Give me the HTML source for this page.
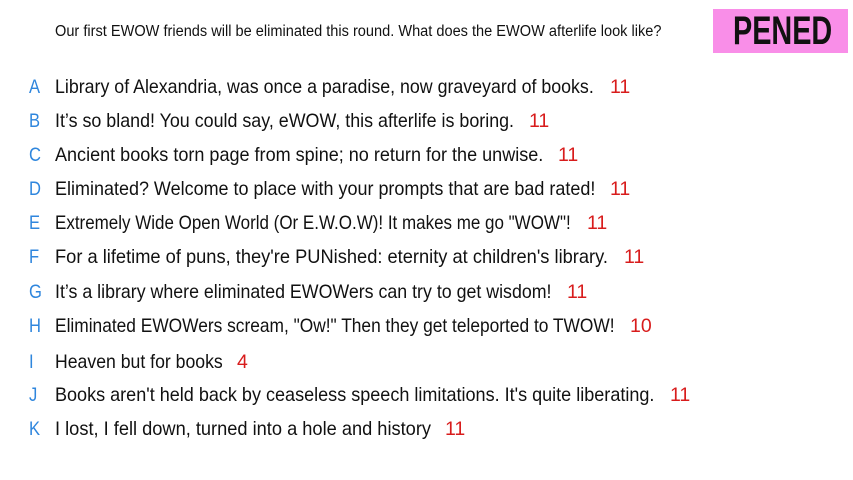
<!DOCTYPE html>
<html><head><meta charset="utf-8"><style>
body{margin:0;width:853px;height:480px;background:#fff;position:relative;overflow:hidden;font-family:"Liberation Sans",sans-serif;color:#111}
.q{position:absolute;left:55px;top:22px;font-size:15.5px;line-height:20px;white-space:nowrap;transform:scaleX(0.94);transform-origin:0 0}
.box{position:absolute;left:713px;top:9px;width:135px;height:44px;background:#f98ee8}
.box span{position:absolute;left:20px;top:0;font-size:40px;font-weight:bold;line-height:44px;color:#111;transform:scaleX(0.72);transform-origin:0 0;white-space:nowrap}
.r{position:absolute;font-size:19.5px;line-height:24px;white-space:nowrap}
.l{left:29px;color:#2f86dd;transform:scaleX(0.85);transform-origin:0 0}
.t{left:55px;transform-origin:0 0}
.n{color:#d81c1c}
</style></head><body>
<div class="q">Our first EWOW friends will be eliminated this round. What does the EWOW afterlife look like?</div>
<div class="box"><span>PENED</span></div>

<div class="r l" style="top:75px">A</div><div class="r t" style="top:75px;transform:scaleX(.912)">Library of Alexandria, was once a paradise, now graveyard of books.</div><div class="r n" style="top:75px;left:610px">11</div>
<div class="r l" style="top:109px">B</div><div class="r t" style="top:109px;transform:scaleX(.916)">It’s so bland! You could say, eWOW, this afterlife is boring.</div><div class="r n" style="top:109px;left:529px">11</div>
<div class="r l" style="top:143px">C</div><div class="r t" style="top:143px;transform:scaleX(.925)">Ancient books torn page from spine; no return for the unwise.</div><div class="r n" style="top:143px;left:558px">11</div>
<div class="r l" style="top:177px">D</div><div class="r t" style="top:177px;transform:scaleX(.922)">Eliminated? Welcome to place with your prompts that are bad rated!</div><div class="r n" style="top:177px;left:610px">11</div>
<div class="r l" style="top:211px">E</div><div class="r t" style="top:211px;transform:scaleX(.871)">Extremely Wide Open World (Or E.W.O.W)! It makes me go "WOW"!</div><div class="r n" style="top:211px;left:587px">11</div>
<div class="r l" style="top:245px">F</div><div class="r t" style="top:245px;transform:scaleX(.937)">For a lifetime of puns, they're PUNished: eternity at children's library.</div><div class="r n" style="top:245px;left:624px">11</div>
<div class="r l" style="top:280px">G</div><div class="r t" style="top:280px;transform:scaleX(.912)">It’s a library where eliminated EWOWers can try to get wisdom!</div><div class="r n" style="top:280px;left:567px">11</div>
<div class="r l" style="top:314px">H</div><div class="r t" style="top:314px;transform:scaleX(.889)">Eliminated EWOWers scream, "Ow!" Then they get teleported to TWOW!</div><div class="r n" style="top:314px;left:630px">10</div>
<div class="r l" style="top:350px">I</div><div class="r t" style="top:350px;transform:scaleX(.905)">Heaven but for books</div><div class="r n" style="top:350px;left:237px">4</div>
<div class="r l" style="top:383px">J</div><div class="r t" style="top:383px;transform:scaleX(.925)">Books aren't held back by ceaseless speech limitations. It's quite liberating.</div><div class="r n" style="top:383px;left:670px">11</div>
<div class="r l" style="top:417px">K</div><div class="r t" style="top:417px;transform:scaleX(.935)">I lost, I fell down, turned into a hole and history</div><div class="r n" style="top:417px;left:445px">11</div>
</body></html>
